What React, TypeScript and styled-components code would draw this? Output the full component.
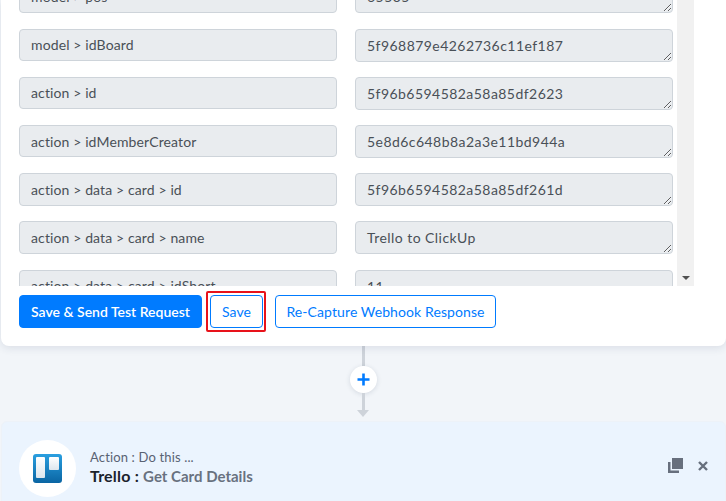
import * as React from 'react'
import styled, { createGlobalStyle } from 'styled-components'

const GlobalStyle = createGlobalStyle`
    html, body {
        margin: 0;
        padding: 0;
        background: #f2f5f9;
        font-family: "Lato", "Liberation Sans", sans-serif;
    }
    * {
        box-sizing: border-box;
    }
`

const Page = styled.div`
    width: 726px;
    height: 501px;
    overflow: hidden;
    display: flex;
    flex-direction: column;
`

const Card = styled.div`
    flex: none;
    height: 346px;
    margin-left: 1px;
    background: #fff;
    border-radius: 0 0 8px 8px;
    box-shadow: 0 2px 8px rgba(40, 60, 90, 0.12);
    display: flex;
    flex-direction: column;
    position: relative;
`

const FieldsArea = styled.div`
    flex: none;
    height: 286px;
    overflow: hidden;
    display: flex;
    width: 693px;
`

const FieldsScroll = styled.div`
    width: 676px;
    height: 286px;
    overflow: hidden;
    padding-left: 18px;
`

const FieldGrid = styled.div`
    display: grid;
    grid-template-columns: 318px 318px;
    column-gap: 18px;
    row-gap: 15.2px;
    margin-top: -19.6px;
`

const FieldName = styled.input`
    width: 100%;
    height: 32.4px;
    padding: 0 11px;
    border: 1px solid #ced4da;
    border-radius: 4px;
    background: #e9ecef;
    color: #495057;
    font-family: inherit;
    font-size: 14px;
    letter-spacing: 0.12px;
    outline: none;
`

const FieldValue = styled.textarea`
    display: block;
    width: 100%;
    height: 33px;
    padding: 6px 11px;
    border: 1px solid #ced4da;
    border-radius: 4px;
    background: #e9ecef;
    color: #495057;
    font-family: inherit;
    font-size: 14px;
    letter-spacing: 0.45px;
    line-height: 20px;
    overflow: hidden;
    outline: none;
`

const ScrollBar = styled.div`
    width: 17px;
    height: 286px;
    background: #f1f1f1;
    display: flex;
    flex-direction: column;
    justify-content: flex-end;
    align-items: center;
    padding-bottom: 6px;
`

const ScrollArrow = styled.div`
    width: 0;
    height: 0;
    border-left: 4px solid transparent;
    border-right: 4px solid transparent;
    border-top: 4px solid #505050;
`

const Footer = styled.div`
    flex: none;
    height: 60px;
    padding: 9px 18px 0;
    display: flex;
    align-items: flex-start;
`

const Button = styled.button<{ $primary?: boolean; $w: number }>`
    width: ${props => props.$w}px;
    height: 33px;
    padding: 0;
    border: 1px solid #007bff;
    border-radius: 4px;
    background: ${props => (props.$primary ? '#007bff' : '#fff')};
    color: ${props => (props.$primary ? '#fff' : '#007bff')};
    font-family: inherit;
    font-size: 14px;
    font-weight: ${props => (props.$primary ? 600 : 400)};
    letter-spacing: ${props => (props.$primary ? 0 : 0.1)}px;
    white-space: nowrap;
`

const SaveWrap = styled.div`
    position: relative;
    margin: 0 12px 0 8px;
`

const RedBox = styled.div`
    position: absolute;
    top: -4px;
    left: -4px;
    right: -3px;
    bottom: -4px;
    border: 2px solid #e8121a;
    border-radius: 2px;
    pointer-events: none;
`

const Connector = styled.div`
    flex: none;
    height: 75px;
    display: flex;
    flex-direction: column;
    align-items: center;
`

const Line = styled.div<{ $h: number }>`
    width: 3px;
    height: ${props => props.$h}px;
    background: #ced3da;
`

const PlusCircle = styled.div`
    width: 27px;
    height: 27px;
    border-radius: 50%;
    background: #fff;
    box-shadow: 0 1px 5px rgba(40, 60, 90, 0.15);
    display: flex;
    align-items: center;
    justify-content: center;
`

const ArrowHead = styled.div`
    width: 0;
    height: 0;
    border-left: 6px solid transparent;
    border-right: 6px solid transparent;
    border-top: 7px solid #ced3da;
`

const ActionCard = styled.div`
    flex: none;
    height: 95px;
    margin-left: 1px;
    padding: 18px 17px 18px 17px;
    background: #ebf4fe;
    border: 1px solid #edf2f8;
    border-radius: 6px;
    display: flex;
    align-items: flex-start;
`

const LogoCircle = styled.div`
    width: 57px;
    height: 57px;
    border-radius: 50%;
    background: #fff;
    flex: none;
    display: flex;
    align-items: center;
    justify-content: center;
`

const ActionText = styled.div`
    margin-left: 14px;
    padding-top: 8px;
    flex: 1;
`

const ActionLabel = styled.div`
    font-size: 13px;
    line-height: 18px;
    letter-spacing: 0.15px;
    color: #596273;
`

const ActionTitle = styled.div`
    font-size: 16px;
    line-height: 20px;
    font-weight: 700;
    letter-spacing: 0.2px;
    color: #1b222c;
`

const ActionEvent = styled.span`
    font-size: 15px;
    letter-spacing: 0;
    color: #68717f;
`

const ActionIcons = styled.div`
    display: flex;
    align-items: center;
    gap: 15px;
    padding: 18px 0 0;
`

const fields = [
    ['model > pos', '65535'],
    ['model > idBoard', '5f968879e4262736c11ef187'],
    ['action > id', '5f96b6594582a58a85df2623'],
    ['action > idMemberCreator', '5e8d6c648b8a2a3e11bd944a'],
    ['action > data > card > id', '5f96b6594582a58a85df261d'],
    ['action > data > card > name', 'Trello to ClickUp'],
    ['action > data > card > idShort', '11'],
]

const TrelloLogo = () => (
    <svg width="29" height="29" viewBox="0 0 29 29">
        <defs>
            <linearGradient id="trelloBg" x1="0" y1="0" x2="0" y2="1">
                <stop offset="0" stopColor="#2a9fe0" />
                <stop offset="1" stopColor="#0a65a3" />
            </linearGradient>
            <linearGradient id="trelloList" x1="0" y1="0" x2="0" y2="1">
                <stop offset="0" stopColor="#ffffff" />
                <stop offset="1" stopColor="#dce6ee" />
            </linearGradient>
        </defs>
        <rect width="29" height="29" rx="3" fill="url(#trelloBg)" />
        <rect x="3" y="3" width="9" height="21" rx="1" fill="url(#trelloList)" />
        <rect x="16" y="3" width="10" height="13" rx="1" fill="url(#trelloList)" />
    </svg>
)

const CopyIcon = () => (
    <svg width="15" height="15" viewBox="0 0 15 15" fill="#676f7d">
        <rect x="4" y="0" width="11" height="11" />
        <path d="M0 4h2.5v8.5H11V15H0z" />
    </svg>
)

const CloseIcon = () => (
    <svg width="10" height="10" viewBox="0 0 10 10" stroke="#676f7d" strokeWidth="2.4" fill="none">
        <path d="M1 1l8 8M9 1l-8 8" />
    </svg>
)

const PlusIcon = () => (
    <svg width="13" height="13" viewBox="0 0 13 13" stroke="#007bff" strokeWidth="2.6" fill="none">
        <path d="M6.5 0.5v12M0.5 6.5h12" />
    </svg>
)

export default function App() {
    return (
        <Page>
            <GlobalStyle />
            <Card>
                <FieldsArea>
                    <FieldsScroll>
                        <FieldGrid>
                            {fields.map(f => (
                                <React.Fragment key={f[0]}>
                                    <FieldName readOnly value={f[0]} />
                                    <FieldValue readOnly value={f[1]} />
                                </React.Fragment>
                            ))}
                        </FieldGrid>
                    </FieldsScroll>
                    <ScrollBar>
                        <ScrollArrow />
                    </ScrollBar>
                </FieldsArea>
                <Footer>
                    <Button $primary $w={183}>Save &amp; Send Test Request</Button>
                    <SaveWrap>
                        <Button $w={53}>Save</Button>
                        <RedBox />
                    </SaveWrap>
                    <Button $w={221}>Re-Capture Webhook Response</Button>
                </Footer>
            </Card>
            <Connector>
                <Line $h={20} />
                <PlusCircle>
                    <PlusIcon />
                </PlusCircle>
                <Line $h={17} />
                <ArrowHead />
            </Connector>
            <ActionCard>
                <LogoCircle>
                    <TrelloLogo />
                </LogoCircle>
                <ActionText>
                    <ActionLabel>Action : Do this ...</ActionLabel>
                    <ActionTitle>
                        Trello : <ActionEvent>Get Card Details</ActionEvent>
                    </ActionTitle>
                </ActionText>
                <ActionIcons>
                    <CopyIcon />
                    <CloseIcon />
                </ActionIcons>
            </ActionCard>
        </Page>
    )
}
